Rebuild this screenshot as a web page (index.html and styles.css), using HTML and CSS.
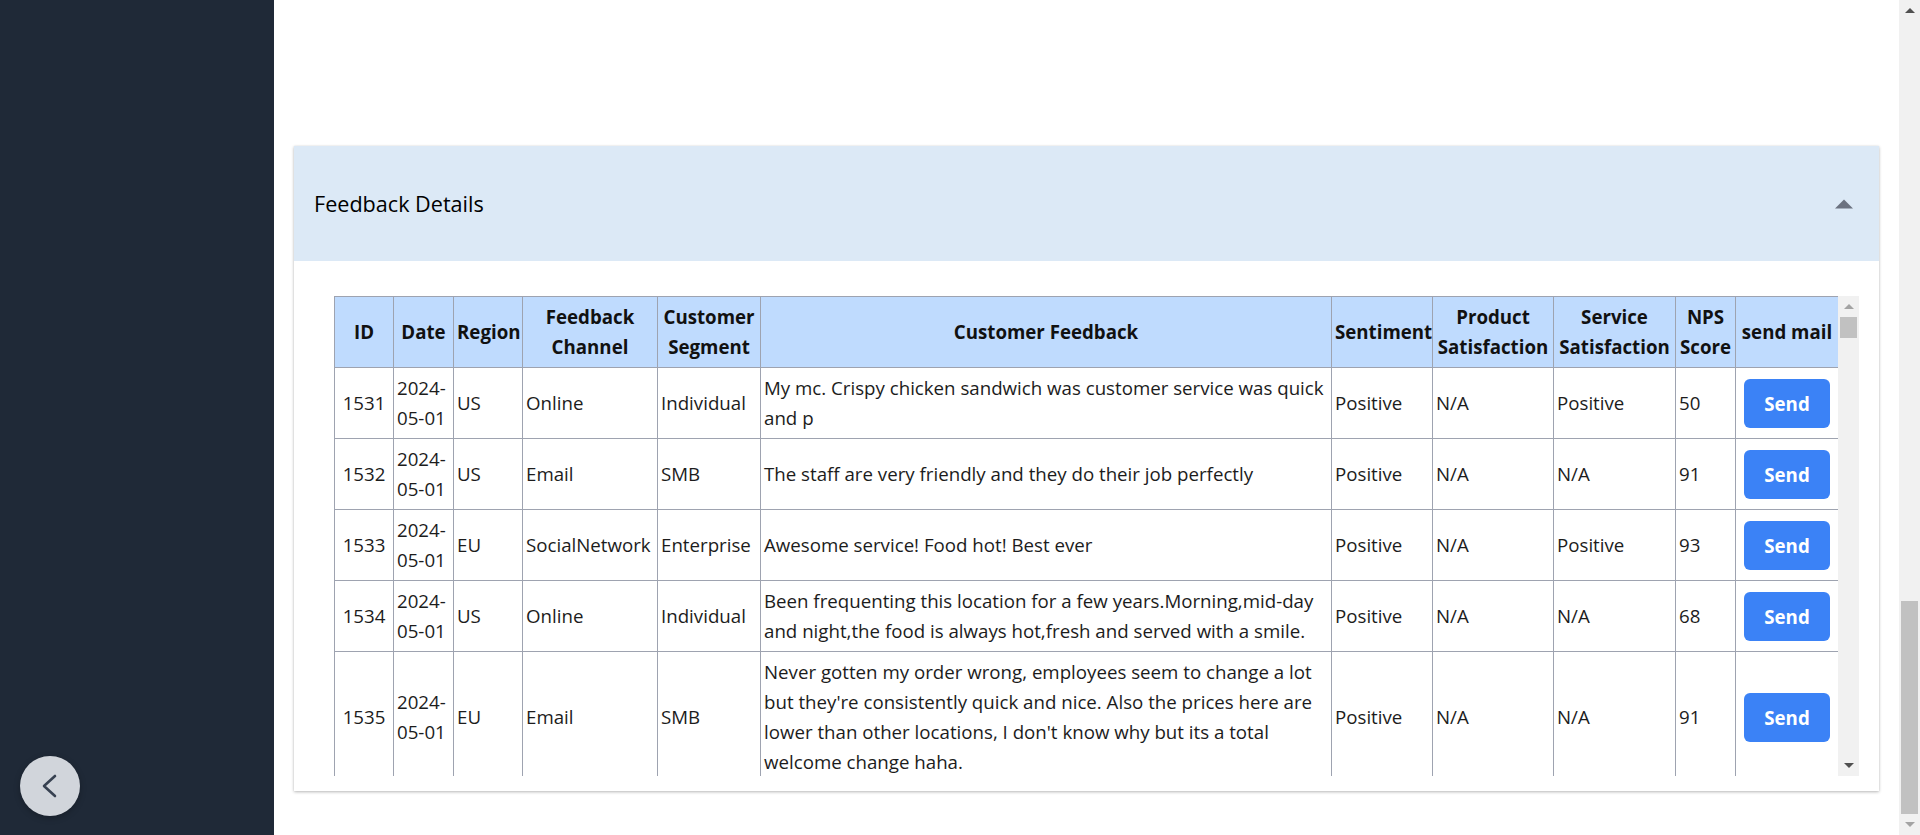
FILE: index.html
```html
<!DOCTYPE html>
<html lang="en">
<head>
<meta charset="utf-8">
<title>Feedback Details</title>
<link rel="stylesheet" href="styles.css">
</head>
<body>
<div class="app">
  <aside class="sidebar">
    <button class="back-btn" aria-label="Collapse sidebar">
      <svg width="60" height="60" viewBox="0 0 60 60"><polyline points="35,20 24,30 35,40" fill="none" stroke="#374151" stroke-width="2.6" stroke-linecap="round" stroke-linejoin="round"/></svg>
    </button>
  </aside>

  <main class="main">
    <section class="card">
      <header class="card-header">
        <h2 class="card-title">Feedback Details</h2>
        <svg class="caret" width="18" height="10" viewBox="0 0 18 10"><polygon points="0,9.5 9,0.5 18,9.5" fill="#6b7280"/></svg>
      </header>
      <div class="card-body">
        <div class="table-frame">
          <div class="table-scroll">
            <table class="fb-table">
              <colgroup>
                <col class="c-id"><col class="c-date"><col class="c-region"><col class="c-channel"><col class="c-segment"><col class="c-feedback"><col class="c-sent"><col class="c-prod"><col class="c-serv"><col class="c-nps"><col class="c-mail">
              </colgroup>
              <thead>
                <tr>
                  <th>ID</th><th>Date</th><th>Region</th><th>Feedback Channel</th><th>Customer Segment</th><th>Customer Feedback</th><th>Sentiment</th><th>Product Satisfaction</th><th>Service Satisfaction</th><th>NPS Score</th><th>send mail</th>
                </tr>
              </thead>
              <tbody>
                <tr>
                  <td class="id">1531</td><td>2024-05-01</td><td>US</td><td>Online</td><td>Individual</td>
                  <td>My mc. Crispy chicken sandwich was customer service was quick and p</td>
                  <td>Positive</td><td>N/A</td><td>Positive</td><td>50</td>
                  <td class="mail"><button class="send-btn">Send</button></td>
                </tr>
                <tr>
                  <td class="id">1532</td><td>2024-05-01</td><td>US</td><td>Email</td><td>SMB</td>
                  <td>The staff are very friendly and they do their job perfectly</td>
                  <td>Positive</td><td>N/A</td><td>N/A</td><td>91</td>
                  <td class="mail"><button class="send-btn">Send</button></td>
                </tr>
                <tr>
                  <td class="id">1533</td><td>2024-05-01</td><td>EU</td><td>SocialNetwork</td><td>Enterprise</td>
                  <td>Awesome service! Food hot! Best ever</td>
                  <td>Positive</td><td>N/A</td><td>Positive</td><td>93</td>
                  <td class="mail"><button class="send-btn">Send</button></td>
                </tr>
                <tr>
                  <td class="id">1534</td><td>2024-05-01</td><td>US</td><td>Online</td><td>Individual</td>
                  <td>Been frequenting this location for a few years.Morning,mid-day and night,the food is always hot,fresh and served with a smile.</td>
                  <td>Positive</td><td>N/A</td><td>N/A</td><td>68</td>
                  <td class="mail"><button class="send-btn">Send</button></td>
                </tr>
                <tr>
                  <td class="id">1535</td><td>2024-05-01</td><td>EU</td><td>Email</td><td>SMB</td>
                  <td>Never gotten my order wrong, employees seem to change a lot but they're consistently quick and nice. Also the prices here are lower than other locations, I don't know why but its a total welcome change haha.</td>
                  <td>Positive</td><td>N/A</td><td>N/A</td><td>91</td>
                  <td class="mail"><button class="send-btn">Send</button></td>
                </tr>
              </tbody>
            </table>
          </div>
          <div class="vscroll">
            <span class="sb-btn"><span class="arrow-up light"></span></span>
            <span class="sb-track"><span class="sb-thumb table-thumb"></span></span>
            <span class="sb-btn"><span class="arrow-down dark"></span></span>
          </div>
        </div>
      </div>
    </section>
  </main>

  <div class="page-scroll">
    <span class="sb-btn"><span class="arrow-up dark"></span></span>
    <span class="sb-track bottom"><span class="sb-thumb page-thumb"></span></span>
    <span class="sb-btn"><span class="arrow-down light"></span></span>
  </div>
</div>
</body>
</html>
```

FILE: styles.css
```css
* { box-sizing: border-box; }

html, body {
  margin: 0;
  height: 100%;
  overflow: hidden;
  background: #ffffff;
  font-family: "Segoe UI", "Open Sans", "Noto Sans", sans-serif;
  color: #1c1c1c;
}

.app {
  display: flex;
  height: 835px;
}

/* Sidebar */
.sidebar {
  width: 274px;
  flex: 0 0 274px;
  background: #1f2937;
  display: flex;
  flex-direction: column;
  justify-content: flex-end;
  padding: 0 0 19px 20px;
}

.back-btn {
  width: 60px;
  height: 60px;
  border: none;
  border-radius: 50%;
  background: #d1d5db;
  padding: 0;
  display: flex;
  align-items: center;
  justify-content: center;
  box-shadow: 0 2px 6px rgba(0, 0, 0, 0.25);
}

.back-btn svg { display: block; }

/* Main */
.main {
  flex: 1;
  padding: 146px 20px 0 20px;
  min-width: 0;
}

.card {
  background: #fff;
  box-shadow: 0 1px 3px rgba(0, 0, 0, 0.28), 0 0 1px rgba(0, 0, 0, 0.08);
}

.card-header {
  height: 115px;
  background: #dce9f6;
  display: flex;
  align-items: center;
  justify-content: space-between;
  padding: 0 26px 0 20px;
}

.card-title {
  margin: 0;
  font-size: 21.6px;
  font-weight: 500;
  color: #000;
}

.caret { display: block; }

.card-body {
  padding: 35px 20px 15px 40px;
}

.table-frame {
  display: flex;
  height: 480px;
}

.table-scroll {
  flex: 1;
  overflow: hidden;
  min-width: 0;
}

/* Table */
.fb-table {
  width: 100%;
  table-layout: fixed;
  border-collapse: collapse;
  font-size: 18.7px;
  line-height: 30px;
  color: #1c1c1c;
}

.c-id { width: 59px; }
.c-date { width: 60px; }
.c-region { width: 69px; }
.c-channel { width: 135px; }
.c-segment { width: 103px; }
.c-feedback { width: 571px; }
.c-sent { width: 101px; }
.c-prod { width: 121px; }
.c-serv { width: 122px; }
.c-nps { width: 60px; }
.c-mail { width: 103px; }

.fb-table th,
.fb-table td {
  border: 1px solid #9ea3b0;
  padding: 5px 3px;
  vertical-align: middle;
}

.fb-table th {
  background: #bfdbfe;
  font-weight: 700;
  text-align: center;
  color: #111;
}

.fb-table td { text-align: left; }
.fb-table td.id { text-align: center; }
.fb-table td.mail { text-align: center; padding: 5px 0; }

.send-btn {
  font-family: inherit;
  font-size: 18.7px;
  font-weight: 700;
  line-height: 29px;
  color: #fff;
  background: #3b82f6;
  border: none;
  border-radius: 6px;
  padding: 10px 0;
  width: 86px;
  display: inline-block;
  vertical-align: middle;
}

/* Scrollbars (drawn) */
.vscroll,
.page-scroll {
  width: 21px;
  flex: 0 0 21px;
  background: #f1f1f1;
  display: flex;
  flex-direction: column;
}

.sb-btn {
  height: 21px;
  flex: 0 0 21px;
  display: flex;
  align-items: center;
  justify-content: center;
}

.sb-track {
  flex: 1;
  display: flex;
  flex-direction: column;
  padding: 0 2px;
}

.sb-track.bottom { justify-content: flex-end; }

.sb-thumb {
  display: block;
  background: #c1c1c1;
}

.table-thumb { height: 21px; }
.page-thumb { height: 213px; }

.arrow-up,
.arrow-down {
  width: 0;
  height: 0;
  border-left: 5px solid transparent;
  border-right: 5px solid transparent;
}

.arrow-up { border-bottom: 5px solid #a3a3a3; }
.arrow-down { border-top: 5px solid #a3a3a3; }
.arrow-up.dark { border-bottom-color: #505050; }
.arrow-down.dark { border-top-color: #505050; }
```
